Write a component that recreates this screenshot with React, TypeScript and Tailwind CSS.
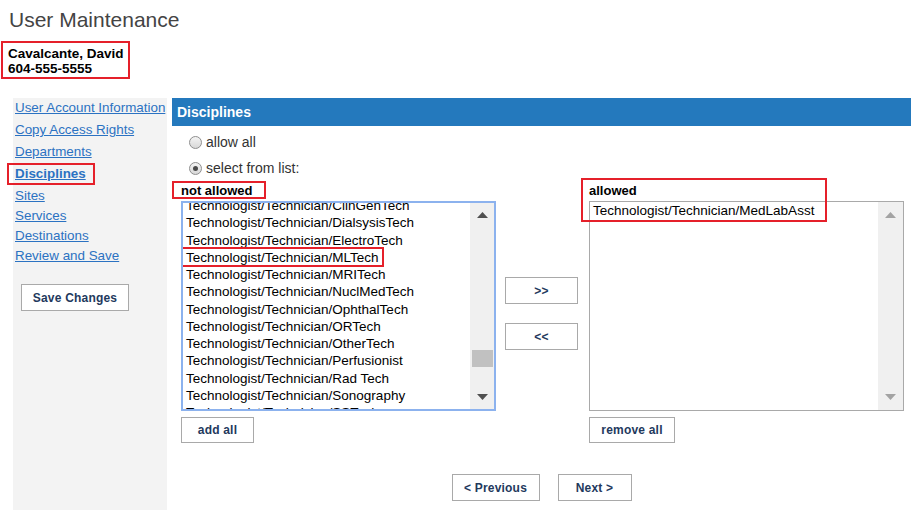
import React from "react";

const leftItems = [
  "Technologist/Technician/ClinGenTech",
  "Technologist/Technician/DialsysisTech",
  "Technologist/Technician/ElectroTech",
  "Technologist/Technician/MLTech",
  "Technologist/Technician/MRITech",
  "Technologist/Technician/NuclMedTech",
  "Technologist/Technician/OphthalTech",
  "Technologist/Technician/ORTech",
  "Technologist/Technician/OtherTech",
  "Technologist/Technician/Perfusionist",
  "Technologist/Technician/Rad Tech",
  "Technologist/Technician/Sonography",
  "Technologist/Technician/SSTech",
];

const links = [
  { t: "User Account Information", mt: "mt-0" },
  { t: "Copy Access Rights", mt: "mt-[4px]" },
  { t: "Departments", mt: "mt-[4px]" },
  { t: "Disciplines", mt: "mt-[4px]", active: true },
  { t: "Sites", mt: "mt-[4px]" },
  { t: "Services", mt: "mt-[2px]" },
  { t: "Destinations", mt: "mt-[2px]" },
  { t: "Review and Save", mt: "mt-[2px]" },
];

function Up({ color }: { color: string }) {
  return (
    <svg width="11" height="6" viewBox="0 0 11 6">
      <polygon points="0,6 11,6 5.5,0" fill={color} />
    </svg>
  );
}
function Down({ color }: { color: string }) {
  return (
    <svg width="11" height="6" viewBox="0 0 11 6">
      <polygon points="0,0 11,0 5.5,6" fill={color} />
    </svg>
  );
}

function Radio({ checked }: { checked?: boolean }) {
  return (
    <span className="w-[13px] h-[13px] rounded-full border border-[#8e8e8e] bg-gradient-to-b from-[#f4f4f4] to-[#d8d8d8] flex items-center justify-center">
      {checked && <span className="w-[5px] h-[5px] rounded-full bg-[#4a4a4a]" />}
    </span>
  );
}

function Btn({ children, w, h = "h-[27px]" }: { children: React.ReactNode; w: string; h?: string }) {
  return (
    <div
      className={`${w} ${h} border border-[#a9a9a9] bg-white flex items-center justify-center text-[12px] font-bold text-[#23395d] tracking-[0.2px]`}
    >
      {children}
    </div>
  );
}

export default function App() {
  return (
    <div
      className="w-[911px] h-[510px] bg-white flex flex-col overflow-hidden"
      style={{ fontFamily: '"Liberation Sans", Arial, sans-serif' }}
    >
      <div className="pl-[9px] pt-[8px] text-[21px] leading-[24px] text-[#444444]">User Maintenance</div>
      <div className="ml-[1px] mt-[9px] w-[129px] h-[38px] border-2 border-[#e5202a] pl-[5px] pt-[3px] text-[13.5px] leading-[15px] font-bold text-black whitespace-nowrap">
        <div>Cavalcante, David</div>
        <div>604-555-5555</div>
      </div>

      <div className="flex flex-1 mt-[19px]">
        {/* Sidebar */}
        <div className="ml-[13px] w-[154px] bg-[#f3f3f3] flex flex-col pl-[2px] pt-[1px]">
          {links.map((l) => (
            <div key={l.t} className={`relative ${l.mt} h-[18px] leading-[18px] text-[13.4px] whitespace-nowrap`}>
              <span className={`underline text-[#2b72c2] ${l.active ? "font-bold" : ""}`}>{l.t}</span>
              {l.active && (
                <span className="absolute left-[-8px] top-[-2px] w-[88px] h-[22px] border-2 border-[#e5202a]" />
              )}
            </div>
          ))}
          <div className="mt-[19px] ml-[6px]">
            <Btn w="w-[108px]">Save Changes</Btn>
          </div>
        </div>

        {/* Main */}
        <div className="ml-[5px] flex-1 flex flex-col">
          <div className="h-[28px] bg-[#2479bd] text-white font-bold text-[14px] leading-[28px] pl-[5px]">Disciplines</div>
          <div className="pl-[17px] mt-[7px] flex flex-col text-[14px] text-[#333333]">
            <div className="h-[18px] flex items-center gap-[4px]">
              <Radio />
              <span>allow all</span>
            </div>
            <div className="h-[18px] mt-[8px] flex items-center gap-[4px]">
              <Radio checked />
              <span>select from list:</span>
            </div>
          </div>

          <div className="flex mt-[6px] pl-[9px]">
            {/* Left column */}
            <div className="flex flex-col w-[315px]">
              <div className="relative h-[18px] leading-[16px] text-[13px] font-bold text-black">
                not allowed
                <span className="absolute left-[-9px] top-[-2px] w-[94px] h-[18px] border-2 border-[#e5202a]" />
              </div>
              <div className="relative h-[210px] border-2 border-[#8cb2ee] flex overflow-hidden">
                <div className="flex-1 overflow-hidden pl-[3px]">
                  <div className="-mt-[6px]">
                    {leftItems.map((it) => (
                      <div key={it} className="relative text-[13.5px] leading-[17.27px] text-black whitespace-nowrap">
                        {it}
                        {it.endsWith("/MLTech") && (
                          <span className="absolute left-[-6px] top-[-2px] w-[204px] h-[20px] border-2 border-[#e5202a]" />
                        )}
                      </div>
                    ))}
                  </div>
                </div>
                <div className="w-[24px] bg-[#f0f0f0] relative flex flex-col items-center">
                  <div className="mt-[9px]">
                    <Up color="#505050" />
                  </div>
                  <div className="absolute left-[2px] top-[147px] w-[21px] h-[17px] bg-[#c1c1c1]" />
                  <div className="mt-auto mb-[9px]">
                    <Down color="#505050" />
                  </div>
                </div>
              </div>
              <div className="mt-[6px]">
                <Btn w="w-[73px]" h="h-[26px]">add all</Btn>
              </div>
            </div>

            {/* Middle */}
            <div className="ml-[9px] mt-[94px] flex flex-col gap-[19px]">
              <Btn w="w-[73px]">&gt;&gt;</Btn>
              <Btn w="w-[73px]">&lt;&lt;</Btn>
            </div>

            {/* Right column */}
            <div className="ml-[11px] flex flex-col w-[315px] relative">
              <span className="absolute left-[-8px] top-[-5px] w-[246px] h-[44px] border-2 border-[#e5202a] z-10" />
              <div className="h-[18px] leading-[16px] text-[13px] font-bold text-black">allowed</div>
              <div className="h-[210px] border border-[#a9a9a9] flex overflow-hidden">
                <div className="flex-1 pl-[3px]">
                  <div className="text-[13.5px] leading-[17px] text-black whitespace-nowrap">
                    Technologist/Technician/MedLabAsst
                  </div>
                </div>
                <div className="w-[25px] bg-[#f0f0f0] flex flex-col items-center">
                  <div className="mt-[10px]">
                    <Up color="#a3a3a3" />
                  </div>
                  <div className="mt-auto mb-[10px]">
                    <Down color="#a3a3a3" />
                  </div>
                </div>
              </div>
              <div className="mt-[6px]">
                <Btn w="w-[86px]" h="h-[26px]">remove all</Btn>
              </div>
            </div>
          </div>

          <div className="mt-[31px] flex justify-center gap-[18px]">
            <Btn w="w-[88px]">&lt; Previous</Btn>
            <Btn w="w-[74px]">Next &gt;</Btn>
          </div>
        </div>
      </div>
    </div>
  );
}
